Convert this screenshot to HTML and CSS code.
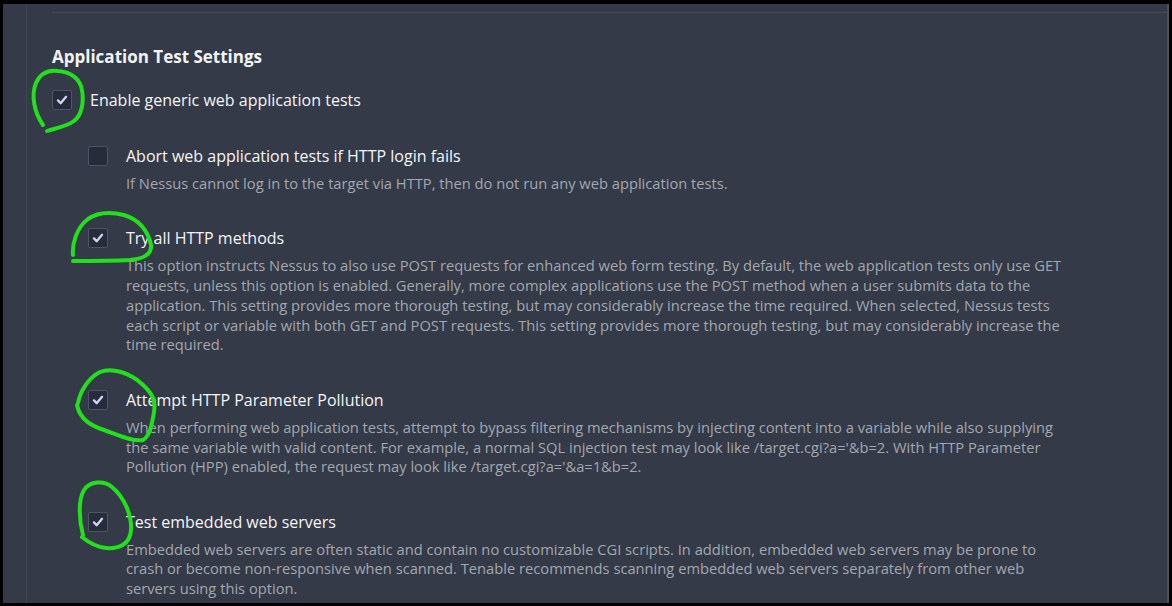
FILE: index.html
```html
<!DOCTYPE html>
<html lang="en">
<head>
<meta charset="utf-8">
<title>Application Test Settings</title>
<link rel="stylesheet" href="styles.css">
</head>
<body>
<div class="frame">
  <div class="rail"></div>
  <div class="main">
    <div class="content">
      <h2 class="title">Application Test Settings</h2>

      <div class="option">
        <span class="box checked"><svg viewBox="0 0 20 20"><path d="M5.5 10.5 L8.5 13.5 L14.5 6.5"/></svg></span>
        <div class="opt-body">
          <div class="label">Enable generic web application tests</div>
        </div>
      </div>

      <div class="sub">
        <div class="option">
          <span class="box"></span>
          <div class="opt-body">
            <div class="label">Abort web application tests if HTTP login fails</div>
            <p class="desc">If Nessus cannot log in to the target via HTTP, then do not run any web application tests.</p>
          </div>
        </div>

        <div class="option">
          <span class="box checked"><svg viewBox="0 0 20 20"><path d="M5.5 10.5 L8.5 13.5 L14.5 6.5"/></svg></span>
          <div class="opt-body">
            <div class="label">Try all HTTP methods</div>
            <p class="desc">This option instructs Nessus to also use POST requests for enhanced web form testing. By default, the web application tests only use GET requests, unless this option is enabled. Generally, more complex applications use the POST method when a user submits data to the application. This setting provides more thorough testing, but may considerably increase the time required. When selected, Nessus tests each script or variable with both GET and POST requests. This setting provides more thorough testing, but may considerably increase the time required.</p>
          </div>
        </div>

        <div class="option">
          <span class="box checked"><svg viewBox="0 0 20 20"><path d="M5.5 10.5 L8.5 13.5 L14.5 6.5"/></svg></span>
          <div class="opt-body">
            <div class="label">Attempt HTTP Parameter Pollution</div>
            <p class="desc">When performing web application tests, attempt to bypass filtering mechanisms by injecting content into a variable while also supplying the same variable with valid content. For example, a normal SQL injection test may look like /target.cgi?a='&amp;b=2. With HTTP Parameter Pollution (HPP) enabled, the request may look like /target.cgi?a='&amp;a=1&amp;b=2.</p>
          </div>
        </div>

        <div class="option">
          <span class="box checked"><svg viewBox="0 0 20 20"><path d="M5.5 10.5 L8.5 13.5 L14.5 6.5"/></svg></span>
          <div class="opt-body">
            <div class="label">Test embedded web servers</div>
            <p class="desc">Embedded web servers are often static and contain no customizable CGI scripts. In addition, embedded web servers may be prone to crash or become non-responsive when scanned. Tenable recommends scanning embedded web servers separately from other web servers using this option.</p>
          </div>
        </div>
      </div>
    </div>
  </div>
</div>

<svg class="marks" viewBox="0 0 1172 606" width="1172" height="606">
  <path d="M43,125 C34,112 31,95 36,83 C41,72 50,70 58,71 C70,72 80,78 82,90 C84,102 82,115 74,121 C66,127 55,128 47,131"/>
  <path d="M73,255 C72,245 76,228 88,219 C98,212 112,212 124,215 C138,219 148,230 151,245 C152,255 142,259 130,260 C110,261 90,261 73,261"/>
  <path d="M78,403 C80,392 88,378 100,372 C112,367 130,373 142,384 C152,393 156,400 154,412 C152,424 150,436 143,440 C133,442 118,435 104,430 C92,426 80,420 77,405"/>
  <path d="M83,535 C79,520 78,500 84,490 C90,481 104,480 112,487 C124,497 132,515 131,530 C130,545 118,549 106,548 C96,547 88,542 82,537"/>
</svg>
</body>
</html>
```

FILE: styles.css
```css
html, body {
  margin: 0;
  padding: 0;
  background: #000;
  width: 1172px;
  height: 606px;
  overflow: hidden;
  font-family: "Open Sans", "Noto Sans", sans-serif;
}

.frame {
  margin: 4px 3px 0 3px;
  height: 599px;
  background: #343a48;
  border-right: 2px solid #4b505a;
  box-sizing: border-box;
  display: flex;
  overflow: hidden;
}

.rail {
  width: 23px;
  flex: none;
  border-right: 1px solid #3f4553;
}

.main {
  flex: 1;
  padding: 8px 0 0 25px;
}

.content {
  border-top: 1px solid #454b58;
  padding-top: 32px;
}

.title {
  margin: 0 0 21px 0;
  font-size: 17px;
  font-weight: 700;
  line-height: 24px;
  color: #f2f3f5;
}

.option {
  display: flex;
  align-items: flex-start;
  gap: 18px;
  margin-bottom: 36px;
}

.option:last-child {
  margin-bottom: 0;
}

.sub {
  padding-left: 36px;
}

.sub .option {
  margin-bottom: 34.5px;
}

.box {
  width: 20px;
  height: 20px;
  flex: none;
  box-sizing: border-box;
  border: 1.5px solid #4d5465;
  background: #262c3a;
  border-radius: 2px;
  display: flex;
  align-items: center;
  justify-content: center;
}

.box svg {
  width: 18px;
  height: 18px;
}

.box svg path {
  fill: none;
  stroke: #cdd4f4;
  stroke-width: 2.6;
  stroke-linecap: round;
  stroke-linejoin: round;
}

.label {
  font-size: 16px;
  font-weight: 500;
  line-height: 20px;
  color: #f4f5f7;
}

.desc {
  margin: 8px 0 0 0;
  width: 948px;
  font-size: 14.7px;
  line-height: 19.8px;
  color: #a3a7ae;
}

.marks {
  position: absolute;
  left: 0;
  top: 0;
  pointer-events: none;
}

.marks path {
  fill: none;
  stroke: #22e01b;
  stroke-width: 4;
  stroke-linecap: round;
  stroke-linejoin: round;
}
```
